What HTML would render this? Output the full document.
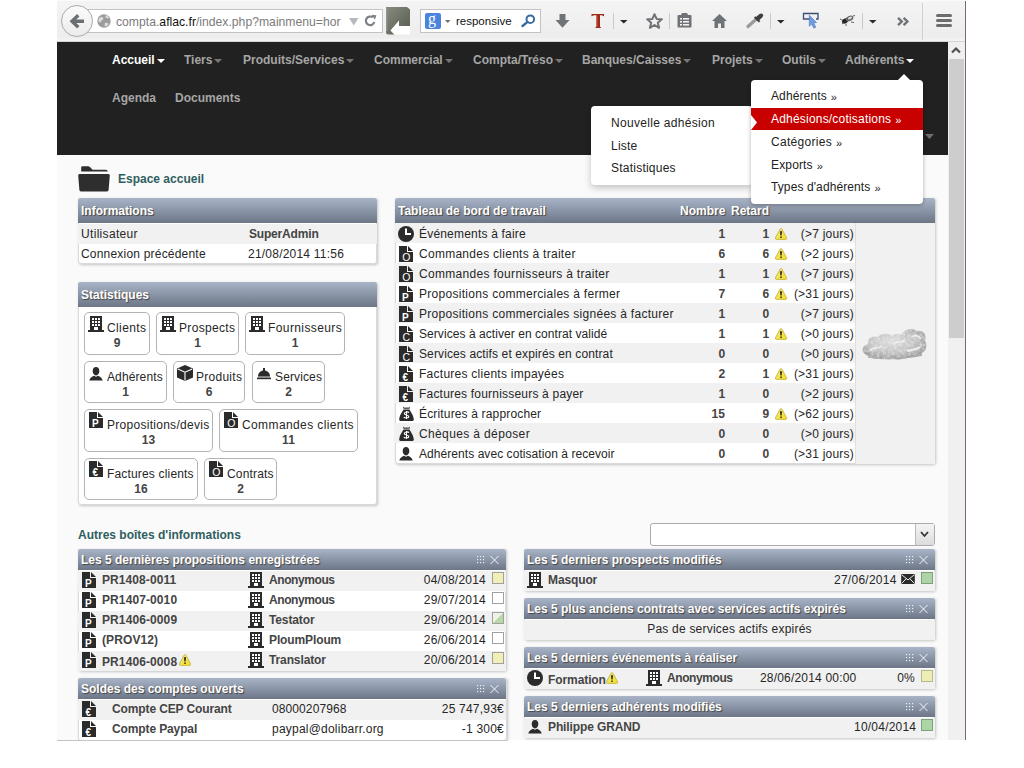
<!DOCTYPE html><html><head><meta charset="utf-8"><title>Dolibarr</title><style>
*{box-sizing:border-box}
html,body{margin:0;padding:0;width:1024px;height:768px;overflow:hidden;background:#fff;font-family:"Liberation Sans",sans-serif;}
.a{position:absolute;white-space:nowrap}
.mi{position:absolute;font-size:12px;font-weight:bold;color:#a6a6a6;white-space:nowrap;line-height:14px}
.car{display:inline-block;width:0;height:0;border-left:4px solid transparent;border-right:4px solid transparent;border-top:4px solid #777;margin-left:2px;vertical-align:1px}
.box{position:absolute;background:#fff;box-shadow:1px 1px 3px rgba(0,0,0,.22);border:1px solid #dadada;border-radius:0 0 3px 3px}
.hd{position:absolute;border-radius:3px 3px 0 0;background:linear-gradient(#a9b4c8,#6c7687);color:#fff;font-weight:bold;font-size:12px;white-space:nowrap;text-shadow:1px 1px 1px #444}
.t{position:absolute;font-size:12px;color:#262626;white-space:nowrap;line-height:22px}
.b{font-weight:bold;color:#444}
.g{background:#f1f1f1}
.sb{position:absolute;border:1px solid #b3b3b3;border-radius:5px;background:#fff}
svg{position:absolute;overflow:visible}
</style></head><body>
<svg width="0" height="0" style="position:absolute">
<defs>
<symbol id="doc" viewBox="0 0 14 16"><path d="M0 0H8V6H14V16H0Z" fill="#2b2b2b"/><path d="M9 0L14 5H9Z" fill="#2b2b2b"/></symbol>
<symbol id="bld" viewBox="0 0 16 16"><path d="M2 0H14V14H2Z" fill="#2b2b2b"/><rect x="0" y="14" width="16" height="2" fill="#2b2b2b"/><g fill="#fff"><rect x="4" y="2" width="2" height="2"/><rect x="7" y="2" width="2" height="2"/><rect x="10" y="2" width="2" height="2"/><rect x="4" y="5" width="2" height="2"/><rect x="7" y="5" width="2" height="2"/><rect x="10" y="5" width="2" height="2"/><rect x="4" y="8" width="2" height="2"/><rect x="7" y="8" width="2" height="2"/><rect x="10" y="8" width="2" height="2"/><rect x="6" y="11" width="4" height="3"/></g></symbol>
<symbol id="per" viewBox="0 0 14 14"><path d="M7 0C9 0 10.3 1.6 10.3 4C10.3 6.3 9 8.4 7 8.4C5 8.4 3.7 6.3 3.7 4C3.7 1.6 5 0 7 0Z" fill="#2b2b2b"/><path d="M0.3 13.6C0.8 10.8 3 9.6 5 8.8L7 9.8L9 8.8C11 9.6 13.2 10.8 13.7 13.6Z" fill="#2b2b2b"/></symbol>
<symbol id="clk" viewBox="0 0 16 16"><circle cx="8" cy="8" r="8" fill="#2b2b2b"/><path d="M7 2.5H9V7H13V9H7Z" fill="#fff"/></symbol>
<symbol id="bag" viewBox="0 0 15 15"><path d="M4 0.5L5.5 1.8L7.5 1.5L9.5 1.8L11 0.5L10.5 2.8H4.5Z" fill="#2b2b2b"/><path d="M4.6 3.6H10.4C11 5 14 8 14.8 13.2C15 14.4 14.2 15 13 15H2C0.8 15 0 14.4 0.2 13.2C1 8 4 5 4.6 3.6Z" fill="#2b2b2b"/><path d="M9.8 6.8C9.4 5.6 5.3 5.6 5.3 7.6C5.3 9.4 9.8 8.6 9.8 10.6C9.8 12.4 5.4 12.4 5 11" stroke="#fff" stroke-width="1.2" fill="none"/><path d="M7.5 5V12.8" stroke="#fff" stroke-width="1"/></symbol>
<symbol id="cube" viewBox="0 0 16 16"><path d="M8 0L16 3.5V12.5L8 16L0 12.5V3.5Z" fill="#2b2b2b"/><path d="M0.8 4L8 7.2L15.2 4M8 7.2V15.5" stroke="#fff" stroke-width="1.1" fill="none"/></symbol>
<symbol id="bell" viewBox="0 0 14 12"><rect x="6" y="0" width="2" height="3" fill="#2b2b2b"/><path d="M1 8.5C1 5 3.5 2.5 7 2.5C10.5 2.5 13 5 13 8.5Z" fill="#2b2b2b"/><rect x="0" y="9.6" width="14" height="1.6" fill="#2b2b2b"/><rect x="1" y="8.5" width="12" height="1.1" fill="#777"/></symbol>
<symbol id="warn" viewBox="0 0 12 12"><defs><linearGradient id="wg" x1="0" y1="0" x2="1" y2="1"><stop offset="0" stop-color="#f4ea8a"/><stop offset="1" stop-color="#f2df1e"/></linearGradient></defs><path d="M6 0.6Q6.6 0.6 7 1.3L11.6 9.8Q12 11.4 10.6 11.4H1.4Q0 11.4 0.4 9.8L5 1.3Q5.4 0.6 6 0.6Z" fill="url(#wg)" stroke="#c2ad3a" stroke-width="0.8"/><path d="M5 3.2H7L6.6 7.6H5.4Z" fill="#222"/><rect x="5.3" y="8.5" width="1.4" height="1.5" fill="#222"/></symbol>
<symbol id="env" viewBox="0 0 15 11"><rect x="0" y="0" width="15" height="11" fill="#2b2b2b"/><path d="M0.5 0.8L7.5 6.5L14.5 0.8M0.5 10.4L5.5 5.2M14.5 10.4L9.5 5.2" stroke="#fff" stroke-width="1" fill="none"/></symbol>
</defs></svg>
<div class="a" style="left:57px;top:0;width:909px;height:740px;background:#fafafa"></div>
<div class="a" style="left:57px;top:0;width:908px;height:41px;background:linear-gradient(#f4f4f4,#ededed 90%,#f5f5f5);border-top:1px solid #fbfbfb"></div>
<div class="a" style="left:57px;top:41px;width:908px;height:1px;background:#d4d4d4"></div>
<div class="a" style="left:965px;top:1px;width:1px;height:739px;background:#7d6b62"></div>
<div class="a" style="left:80px;top:9px;width:303px;height:24px;background:#fff;border:1px solid #c3c3c3"></div>
<div class="a" style="left:61px;top:5px;width:32px;height:32px;border-radius:50%;background:linear-gradient(#fbfbfb,#ececec);border:1px solid #ababab"></div>
<svg style="left:70px;top:14px" width="15" height="15"><path d="M8.3 1.2L2 7.2L8.3 13.2M2.8 7.2H14" stroke="#6c6f72" stroke-width="3.4" fill="none" stroke-linejoin="miter"/></svg>
<svg style="left:97px;top:14px" width="14" height="14"><circle cx="7" cy="7" r="6.7" fill="#9c9c9c"/><path d="M3 3.5C4.5 2.5 6 3 6.5 4.5C6 6 4.5 6 4 7.5C3.5 9 2 8.5 1.5 7C1.5 5.5 2 4.5 3 3.5ZM8 9C9.5 8.5 11 9 11.5 10C10.5 11.8 9 12.5 8 12.5C7.5 11.5 7.5 10 8 9ZM8.5 1.2C10 1.5 11.5 2.5 12.2 4C11 4.5 9.5 4 8.5 3.5Z" fill="#dcdcdc"/></svg>
<div class="a" style="left:116px;top:14px;font-size:12.2px;line-height:16px;color:#7b7b7b">compta.<span style="color:#111">aflac.fr</span>/index.php?mainmenu=hor</div>
<svg style="left:349px;top:18px" width="10" height="8"><path d="M0 0H9.5L4.75 7.5Z" fill="#b5b9bd"/></svg>
<svg style="left:364px;top:14px" width="13" height="13"><path d="M10.3 8A4.3 4.3 0 1 1 8.8 3.4" stroke="#7c8187" stroke-width="2.2" fill="none"/><path d="M7.5 0.8L12.3 1.2L11 5.8Z" fill="#7c8187"/></svg>
<svg style="left:386px;top:7px" width="25" height="29"><defs><linearGradient id="dg" x1="0" y1="0" x2="1" y2="1"><stop offset="0" stop-color="#878b80"/><stop offset="1" stop-color="#555a4f"/></linearGradient></defs><path d="M0 0H21L24 2.5V19H13V13.8L4.6 23.5L8.5 27.5H2.5Q0 27.5 0 25Z" fill="url(#dg)"/><path d="M13 13.8V19H24V27.5H8.5L4.6 23.5Z" fill="#fff"/><path d="M0.8 1V24" stroke="#9a9e94" stroke-width="1"/></svg>
<div class="a" style="left:420px;top:9px;width:121px;height:24px;background:#fff;border:1px solid #c3c3c3"></div>
<div class="a" style="left:425px;top:13px;width:16px;height:16px;border-radius:2px;background:#4b84df"></div>
<div class="a" style="left:428px;top:11px;font-family:'Liberation Serif';font-size:16px;line-height:16px;color:#fff">g</div>
<svg style="left:445px;top:20px" width="6" height="4"><path d="M0 0H5.5L2.75 3Z" fill="#6d6d6d"/></svg>
<div class="a" style="left:456px;top:13px;font-size:11.5px;line-height:16px;color:#111">responsive</div>
<svg style="left:521px;top:14px" width="15" height="13"><circle cx="9.3" cy="5.2" r="3.8" stroke="#3b6aa0" stroke-width="2" fill="none"/><path d="M6.6 7.9L1.5 12" stroke="#3b6aa0" stroke-width="2.4" stroke-linecap="round"/></svg>
<svg style="left:555px;top:14px" width="15" height="14"><path d="M4.5 0H10.5V6H14.5L7.5 13.8L0.5 6H4.5Z" fill="#6f7276"/></svg>
<svg style="left:590px;top:13px" width="16" height="16"><path d="M1.5 1H14V3.2H13.4Q12.8 2.3 11.5 2.3H10V13.6Q10 14.3 11 14.4V15H5.3V14.4Q6.4 14.3 6.4 13.6V2.3H4.2Q2.8 2.3 2.2 3.2H1.5Z" fill="#9c2a1a"/><path d="M7.2 2.5V13.5" stroke="#d0503a" stroke-width="0.8"/></svg>
<div class="a" style="left:613px;top:13px;width:1px;height:16px;background:#c9c9c9"></div>
<svg style="left:620px;top:20px" width="8" height="4"><path d="M0 0H7.5L3.75 3.6Z" fill="#2a2a2a"/></svg>
<svg style="left:646px;top:13px" width="17" height="16"><path d="M8.5 1.2L10.6 5.9L15.8 6.3L11.8 9.7L13.1 14.8L8.5 12L3.9 14.8L5.2 9.7L1.2 6.3L6.4 5.9Z" stroke="#6f7276" stroke-width="2" fill="none" stroke-linejoin="round"/></svg>
<div class="a" style="left:669px;top:13px;width:1px;height:16px;background:#c9c9c9"></div>
<svg style="left:677px;top:13px" width="15" height="15"><path d="M5 0H10L11 2H13.5Q14.5 2 14.5 3V13.5Q14.5 14.5 13.5 14.5H1.5Q0.5 14.5 0.5 13.5V3Q0.5 2 1.5 2H4Z" fill="#6f7276"/><g fill="#f2f2f2"><rect x="3" y="5" width="2" height="1.6"/><rect x="6" y="5" width="6" height="1.6"/><rect x="3" y="8" width="2" height="1.6"/><rect x="6" y="8" width="6" height="1.6"/><rect x="3" y="11" width="2" height="1.6"/><rect x="6" y="11" width="6" height="1.6"/></g></svg>
<svg style="left:712px;top:14px" width="15" height="14"><path d="M7.5 0L15 7H12.5V14H9V9.5H6V14H2.5V7H0Z" fill="#6f7276"/></svg>
<svg style="left:746px;top:13px" width="18" height="15"><path d="M2 13.5L11 5.5" stroke="#9a9a9a" stroke-width="3.2" stroke-linecap="round"/><path d="M9.5 4.5L13.5 1Q15.5 -0.3 16.8 1.2Q17.8 2.8 16.2 4.4L12.5 7.8Z" fill="#3e3e3e"/><path d="M8.6 4L13.6 8.8" stroke="#3e3e3e" stroke-width="2"/></svg>
<div class="a" style="left:770px;top:13px;width:1px;height:16px;background:#c9c9c9"></div>
<svg style="left:777px;top:20px" width="8" height="4"><path d="M0 0H7.5L3.75 3.6Z" fill="#2a2a2a"/></svg>
<svg style="left:802px;top:12px" width="18" height="18"><path d="M8 7H1.5V1.5H16V7H14" stroke="#3d4f70" stroke-width="1.3" fill="none"/><path d="M7.3 3.2L14.6 10.6L11.6 10.9L13.8 15.2L11.8 16.2L9.6 11.9L7.3 14.3Z" fill="#6f9be0" stroke="#4a78c0" stroke-width="0.6"/></svg>
<svg style="left:839px;top:14px" width="18" height="13"><defs><filter id="bb"><feGaussianBlur stdDeviation="0.5"/></filter></defs><g filter="url(#bb)"><ellipse cx="6" cy="7" rx="3.2" ry="2.4" fill="#222" transform="rotate(-30 6 7)"/><ellipse cx="10.5" cy="4.5" rx="4" ry="2.6" fill="#666" transform="rotate(-25 10.5 4.5)"/><ellipse cx="11" cy="4" rx="2.2" ry="1.2" fill="#ddd" transform="rotate(-25 11 4)"/><path d="M1 5L4 6.5M3 10L5 8.5M7 12L7 9.5M12 8L15 8.5M14 2L16 1.5" stroke="#555" stroke-width="0.9"/></g></svg>
<div class="a" style="left:862px;top:13px;width:1px;height:16px;background:#c9c9c9"></div>
<svg style="left:869px;top:20px" width="8" height="4"><path d="M0 0H7.5L3.75 3.6Z" fill="#2a2a2a"/></svg>
<svg style="left:897px;top:17px" width="13" height="9"><path d="M1 0.8L4.8 4.5L1 8.2M6.6 0.8L10.4 4.5L6.6 8.2" stroke="#6f7276" stroke-width="2.4" fill="none"/></svg>
<div class="a" style="left:922px;top:3px;width:1px;height:37px;background:#d0d0d0"></div>
<div class="a" style="left:936px;top:14px;width:16px;height:3px;border-radius:1.5px;background:#6c6c6c"></div>
<div class="a" style="left:936px;top:19px;width:16px;height:3px;border-radius:1.5px;background:#6c6c6c"></div>
<div class="a" style="left:936px;top:24px;width:16px;height:3px;border-radius:1.5px;background:#6c6c6c"></div>
<div class="a" style="left:57px;top:42px;width:891px;height:113px;background:#212121"></div>
<div class="mi" style="left:112px;top:53px;color:#fff">Accueil<span class="car" style="border-top-color:#fff"></span></div>
<div class="mi" style="left:184px;top:53px;color:#a6a6a6">Tiers<span class="car" style="border-top-color:#777"></span></div>
<div class="mi" style="left:243px;top:53px;color:#a6a6a6">Produits/Services<span class="car" style="border-top-color:#777"></span></div>
<div class="mi" style="left:374px;top:53px;color:#a6a6a6">Commercial<span class="car" style="border-top-color:#777"></span></div>
<div class="mi" style="left:473px;top:53px;color:#a6a6a6">Compta/Tréso<span class="car" style="border-top-color:#777"></span></div>
<div class="mi" style="left:582px;top:53px;color:#a6a6a6">Banques/Caisses<span class="car" style="border-top-color:#777"></span></div>
<div class="mi" style="left:712px;top:53px;color:#a6a6a6">Projets<span class="car" style="border-top-color:#777"></span></div>
<div class="mi" style="left:782px;top:53px;color:#a6a6a6">Outils<span class="car" style="border-top-color:#777"></span></div>
<div class="mi" style="left:845px;top:53px;color:#a6a6a6">Adhérents<span class="car" style="border-top-color:#fff"></span></div>
<div class="mi" style="left:112px;top:91px">Agenda</div>
<div class="mi" style="left:175px;top:91px">Documents</div>
<svg style="left:925px;top:134px" width="10" height="6"><path d="M0 0H9L4.5 5Z" fill="#6e6e6e"/></svg>
<div class="a" style="left:948px;top:42px;width:17px;height:698px;background:#f0f0f0"></div>
<svg style="left:951px;top:46px" width="10" height="8"><path d="M1 6.5L5 2.5L9 6.5" stroke="#505050" stroke-width="2.2" fill="none"/></svg>
<div class="a" style="left:949px;top:59px;width:15px;height:279px;background:#cdcdcd"></div>
<svg style="left:78px;top:166px" width="33" height="27"><path d="M4.5 0.3H10Q11.2 0.3 12.2 1.2L14.6 3.7H28Q29.6 3.7 29.8 5.6H3.2V1.6Q3.2 0.3 4.5 0.3Z" fill="#2e2e2e"/><path d="M1.6 8H30.4Q32 8 31.8 9.6L30.6 24Q30.5 25.4 29 25.4H3Q1.5 25.4 1.4 24L0.2 9.6Q0 8 1.6 8Z" fill="#2e2e2e"/></svg>
<div class="a b" style="left:118px;top:171px;font-size:12px;line-height:16px;color:#2f5e60">Espace accueil</div>
<div class="box" style="left:78px;top:198px;width:299px;height:66px"></div>
<div class="hd" style="left:78px;top:198px;width:299px;height:25px;line-height:27px;padding-left:3px">Informations</div>
<div class="a g" style="left:78px;top:224px;width:299px;height:20px"></div>
<div class="t" style="left:81px;top:223px;letter-spacing:0.32px">Utilisateur</div>
<div class="t b" style="left:249px;top:223px;letter-spacing:-0.18px">SuperAdmin</div>
<div class="t" style="left:81px;top:243px;letter-spacing:0.20px">Connexion précédente</div>
<div class="t" style="left:248px;top:243px;letter-spacing:0.22px">21/08/2014 11:56</div>
<div class="box" style="left:78px;top:282px;width:299px;height:223px"></div>
<div class="hd" style="left:78px;top:282px;width:299px;height:25px;line-height:27px;padding-left:3px">Statistiques</div>
<div class="sb" style="left:84px;top:312px;width:66px;height:43px"></div>
<svg style="left:88px;top:316px" width="16" height="16"><use href="#bld" width="16" height="16"/></svg>
<div class="t" style="left:107px;top:317px;letter-spacing:0.38px">Clients</div>
<div class="t b" style="left:84px;width:66px;text-align:center;top:332px;letter-spacing:-0.12px">9</div>
<div class="sb" style="left:156px;top:312px;width:83px;height:43px"></div>
<svg style="left:160px;top:316px" width="16" height="16"><use href="#bld" width="16" height="16"/></svg>
<div class="t" style="left:179px;top:317px;letter-spacing:0.33px">Prospects</div>
<div class="t b" style="left:156px;width:83px;text-align:center;top:332px;letter-spacing:-0.12px">1</div>
<div class="sb" style="left:245px;top:312px;width:100px;height:43px"></div>
<svg style="left:249px;top:316px" width="16" height="16"><use href="#bld" width="16" height="16"/></svg>
<div class="t" style="left:268px;top:317px;letter-spacing:0.40px">Fournisseurs</div>
<div class="t b" style="left:245px;width:100px;text-align:center;top:332px;letter-spacing:-0.12px">1</div>
<div class="sb" style="left:84px;top:361px;width:83px;height:42px"></div>
<svg style="left:89px;top:367px" width="14" height="14"><use href="#per" width="14" height="14"/></svg>
<div class="t" style="left:107px;top:366px;letter-spacing:0.12px">Adhérents</div>
<div class="t b" style="left:84px;width:83px;text-align:center;top:381px;letter-spacing:-0.12px">1</div>
<div class="sb" style="left:173px;top:361px;width:72px;height:42px"></div>
<svg style="left:177px;top:365px" width="16" height="16"><use href="#cube" width="16" height="16"/></svg>
<div class="t" style="left:196px;top:366px;letter-spacing:0.27px">Produits</div>
<div class="t b" style="left:173px;width:72px;text-align:center;top:381px;letter-spacing:-0.12px">6</div>
<div class="sb" style="left:252px;top:361px;width:73px;height:42px"></div>
<svg style="left:257px;top:368px" width="14" height="12"><use href="#bell" width="14" height="12"/></svg>
<div class="t" style="left:275px;top:366px;letter-spacing:0.13px">Services</div>
<div class="t b" style="left:252px;width:73px;text-align:center;top:381px;letter-spacing:-0.12px">2</div>
<div class="sb" style="left:84px;top:409px;width:129px;height:43px"></div>
<svg style="left:89px;top:412px" width="14" height="16"><use href="#doc" width="14" height="16"/><text x="3.0" y="14.8" font-family="Liberation Sans" font-weight="bold" font-size="10" fill="#fff">P</text></svg>
<div class="t" style="left:107px;top:414px;letter-spacing:0.28px">Propositions/devis</div>
<div class="t b" style="left:84px;width:129px;text-align:center;top:429px;letter-spacing:0.10px">13</div>
<div class="sb" style="left:219px;top:409px;width:139px;height:43px"></div>
<svg style="left:224px;top:412px" width="14" height="16"><use href="#doc" width="14" height="16"/><text x="3.2" y="14.8" font-family="Liberation Sans" font-weight="normal" font-size="10.5" fill="#fff">O</text></svg>
<div class="t" style="left:242px;top:414px;letter-spacing:0.39px">Commandes clients</div>
<div class="t b" style="left:219px;width:139px;text-align:center;top:429px;letter-spacing:0.10px">11</div>
<div class="sb" style="left:84px;top:458px;width:114px;height:42px"></div>
<svg style="left:89px;top:461px" width="14" height="16"><use href="#doc" width="14" height="16"/><text x="3.6" y="14.8" font-family="Liberation Sans" font-weight="bold" font-size="10" fill="#fff">€</text></svg>
<div class="t" style="left:107px;top:463px;letter-spacing:0.17px">Factures clients</div>
<div class="t b" style="left:84px;width:114px;text-align:center;top:478px;letter-spacing:0.10px">16</div>
<div class="sb" style="left:204px;top:458px;width:73px;height:42px"></div>
<svg style="left:209px;top:461px" width="14" height="16"><use href="#doc" width="14" height="16"/><text x="3.2" y="14.8" font-family="Liberation Sans" font-weight="normal" font-size="10.5" fill="#fff">O</text></svg>
<div class="t" style="left:227px;top:463px;letter-spacing:0.16px">Contrats</div>
<div class="t b" style="left:204px;width:73px;text-align:center;top:478px;letter-spacing:-0.12px">2</div>
<div class="box" style="left:395px;top:198px;width:540px;height:266px"></div>
<div class="hd" style="left:395px;top:198px;width:540px;height:25px;line-height:27px;padding-left:3px">Tableau de bord de travail</div>
<div class="hd" style="left:680px;top:198px;height:25px;line-height:27px;background:none">Nombre</div>
<div class="hd" style="left:731px;top:198px;height:25px;line-height:27px;background:none">Retard</div>
<div class="a g" style="left:855px;top:223px;width:80px;height:241px;border-left:1px solid #e0e0e0"></div>
<div class="a g" style="left:395px;top:223px;width:460px;height:20px"></div>
<svg style="left:398px;top:226px" width="16" height="16"><use href="#clk" width="16" height="16"/></svg>
<div class="t" style="left:419px;top:223px;letter-spacing:0.19px">Événements à faire</div>
<div class="t b" style="left:640px;width:85px;text-align:right;top:223px;letter-spacing:-0.12px">1</div>
<div class="t b" style="left:700px;width:69px;text-align:right;top:223px;letter-spacing:-0.12px">1</div>
<svg style="left:775px;top:228px" width="12" height="12"><use href="#warn" width="12" height="12"/></svg>
<div class="t" style="left:780px;width:74px;text-align:right;top:223px;letter-spacing:0.22px">(>7 jours)</div>
<svg style="left:399px;top:246px" width="14" height="16"><use href="#doc" width="14" height="16"/><text x="3.2" y="14.8" font-family="Liberation Sans" font-weight="normal" font-size="10.5" fill="#fff">O</text></svg>
<div class="t" style="left:419px;top:243px;letter-spacing:0.27px">Commandes clients à traiter</div>
<div class="t b" style="left:640px;width:85px;text-align:right;top:243px;letter-spacing:-0.12px">6</div>
<div class="t b" style="left:700px;width:69px;text-align:right;top:243px;letter-spacing:-0.12px">6</div>
<svg style="left:775px;top:248px" width="12" height="12"><use href="#warn" width="12" height="12"/></svg>
<div class="t" style="left:780px;width:74px;text-align:right;top:243px;letter-spacing:0.22px">(>2 jours)</div>
<div class="a g" style="left:395px;top:263px;width:460px;height:20px"></div>
<svg style="left:399px;top:266px" width="14" height="16"><use href="#doc" width="14" height="16"/><text x="3.2" y="14.8" font-family="Liberation Sans" font-weight="normal" font-size="10.5" fill="#fff">O</text></svg>
<div class="t" style="left:419px;top:263px;letter-spacing:0.31px">Commandes fournisseurs à traiter</div>
<div class="t b" style="left:640px;width:85px;text-align:right;top:263px;letter-spacing:-0.12px">1</div>
<div class="t b" style="left:700px;width:69px;text-align:right;top:263px;letter-spacing:-0.12px">1</div>
<svg style="left:775px;top:268px" width="12" height="12"><use href="#warn" width="12" height="12"/></svg>
<div class="t" style="left:780px;width:74px;text-align:right;top:263px;letter-spacing:0.22px">(>7 jours)</div>
<svg style="left:399px;top:286px" width="14" height="16"><use href="#doc" width="14" height="16"/><text x="3.0" y="14.8" font-family="Liberation Sans" font-weight="bold" font-size="10" fill="#fff">P</text></svg>
<div class="t" style="left:419px;top:283px;letter-spacing:0.29px">Propositions commerciales à fermer</div>
<div class="t b" style="left:640px;width:85px;text-align:right;top:283px;letter-spacing:-0.12px">7</div>
<div class="t b" style="left:700px;width:69px;text-align:right;top:283px;letter-spacing:-0.12px">6</div>
<svg style="left:775px;top:288px" width="12" height="12"><use href="#warn" width="12" height="12"/></svg>
<div class="t" style="left:780px;width:74px;text-align:right;top:283px;letter-spacing:0.22px">(>31 jours)</div>
<div class="a g" style="left:395px;top:303px;width:460px;height:20px"></div>
<svg style="left:399px;top:306px" width="14" height="16"><use href="#doc" width="14" height="16"/><text x="3.0" y="14.8" font-family="Liberation Sans" font-weight="bold" font-size="10" fill="#fff">P</text></svg>
<div class="t" style="left:419px;top:303px;letter-spacing:0.29px">Propositions commerciales signées à facturer</div>
<div class="t b" style="left:640px;width:85px;text-align:right;top:303px;letter-spacing:-0.12px">1</div>
<div class="t b" style="left:700px;width:69px;text-align:right;top:303px;letter-spacing:-0.12px">0</div>
<div class="t" style="left:780px;width:74px;text-align:right;top:303px;letter-spacing:0.22px">(>7 jours)</div>
<svg style="left:399px;top:326px" width="14" height="16"><use href="#doc" width="14" height="16"/><text x="3.4" y="14.8" font-family="Liberation Sans" font-weight="normal" font-size="10.5" fill="#fff">C</text></svg>
<div class="t" style="left:419px;top:323px;letter-spacing:0.06px">Services à activer en contrat validé</div>
<div class="t b" style="left:640px;width:85px;text-align:right;top:323px;letter-spacing:-0.12px">1</div>
<div class="t b" style="left:700px;width:69px;text-align:right;top:323px;letter-spacing:-0.12px">1</div>
<svg style="left:775px;top:328px" width="12" height="12"><use href="#warn" width="12" height="12"/></svg>
<div class="t" style="left:780px;width:74px;text-align:right;top:323px;letter-spacing:0.22px">(>0 jours)</div>
<div class="a g" style="left:395px;top:343px;width:460px;height:20px"></div>
<svg style="left:399px;top:346px" width="14" height="16"><use href="#doc" width="14" height="16"/><text x="3.4" y="14.8" font-family="Liberation Sans" font-weight="normal" font-size="10.5" fill="#fff">C</text></svg>
<div class="t" style="left:419px;top:343px;letter-spacing:0.12px">Services actifs et expirés en contrat</div>
<div class="t b" style="left:640px;width:85px;text-align:right;top:343px;letter-spacing:-0.12px">0</div>
<div class="t b" style="left:700px;width:69px;text-align:right;top:343px;letter-spacing:-0.12px">0</div>
<div class="t" style="left:780px;width:74px;text-align:right;top:343px;letter-spacing:0.22px">(>0 jours)</div>
<svg style="left:399px;top:366px" width="14" height="16"><use href="#doc" width="14" height="16"/><text x="3.6" y="14.8" font-family="Liberation Sans" font-weight="bold" font-size="10" fill="#fff">€</text></svg>
<div class="t" style="left:419px;top:363px;letter-spacing:0.26px">Factures clients impayées</div>
<div class="t b" style="left:640px;width:85px;text-align:right;top:363px;letter-spacing:-0.12px">2</div>
<div class="t b" style="left:700px;width:69px;text-align:right;top:363px;letter-spacing:-0.12px">1</div>
<svg style="left:775px;top:368px" width="12" height="12"><use href="#warn" width="12" height="12"/></svg>
<div class="t" style="left:780px;width:74px;text-align:right;top:363px;letter-spacing:0.22px">(>31 jours)</div>
<div class="a g" style="left:395px;top:383px;width:460px;height:20px"></div>
<svg style="left:399px;top:386px" width="14" height="16"><use href="#doc" width="14" height="16"/><text x="3.6" y="14.8" font-family="Liberation Sans" font-weight="bold" font-size="10" fill="#fff">€</text></svg>
<div class="t" style="left:419px;top:383px;letter-spacing:0.20px">Factures fournisseurs à payer</div>
<div class="t b" style="left:640px;width:85px;text-align:right;top:383px;letter-spacing:-0.12px">1</div>
<div class="t b" style="left:700px;width:69px;text-align:right;top:383px;letter-spacing:-0.12px">0</div>
<div class="t" style="left:780px;width:74px;text-align:right;top:383px;letter-spacing:0.22px">(>2 jours)</div>
<svg style="left:399px;top:406px" width="15" height="15"><use href="#bag" width="15" height="15"/></svg>
<div class="t" style="left:419px;top:403px;letter-spacing:0.16px">Écritures à rapprocher</div>
<div class="t b" style="left:640px;width:85px;text-align:right;top:403px;letter-spacing:0.10px">15</div>
<div class="t b" style="left:700px;width:69px;text-align:right;top:403px;letter-spacing:-0.12px">9</div>
<svg style="left:775px;top:408px" width="12" height="12"><use href="#warn" width="12" height="12"/></svg>
<div class="t" style="left:780px;width:74px;text-align:right;top:403px;letter-spacing:0.22px">(>62 jours)</div>
<div class="a g" style="left:395px;top:423px;width:460px;height:20px"></div>
<svg style="left:399px;top:426px" width="15" height="15"><use href="#bag" width="15" height="15"/></svg>
<div class="t" style="left:419px;top:423px;letter-spacing:0.37px">Chèques à déposer</div>
<div class="t b" style="left:640px;width:85px;text-align:right;top:423px;letter-spacing:-0.12px">0</div>
<div class="t b" style="left:700px;width:69px;text-align:right;top:423px;letter-spacing:-0.12px">0</div>
<div class="t" style="left:780px;width:74px;text-align:right;top:423px;letter-spacing:0.22px">(>0 jours)</div>
<svg style="left:399px;top:447px" width="14" height="14"><use href="#per" width="14" height="14"/></svg>
<div class="t" style="left:419px;top:443px;letter-spacing:0.06px">Adhérents avec cotisation à recevoir</div>
<div class="t b" style="left:640px;width:85px;text-align:right;top:443px;letter-spacing:-0.12px">0</div>
<div class="t b" style="left:700px;width:69px;text-align:right;top:443px;letter-spacing:-0.12px">0</div>
<div class="t" style="left:780px;width:74px;text-align:right;top:443px;letter-spacing:0.22px">(>31 jours)</div>
<svg style="left:860px;top:324px" width="72" height="40"><defs><filter id="bl" x="-20%" y="-20%" width="140%" height="140%"><feTurbulence type="fractalNoise" baseFrequency="0.35" numOctaves="2" seed="3" result="n"/><feColorMatrix in="n" type="matrix" values="0 0 0 0 1  0 0 0 0 1  0 0 0 0 1  0.9 0 0 0 -0.35" result="w"/><feComposite in="w" in2="SourceGraphic" operator="in" result="wt"/><feMerge result="m"><feMergeNode in="SourceGraphic"/><feMergeNode in="wt"/></feMerge><feGaussianBlur in="m" stdDeviation="0.5"/></filter>
<radialGradient id="cg" cx="0.45" cy="0.4" r="0.6"><stop offset="0" stop-color="#dcdcdc"/><stop offset="0.6" stop-color="#c4c4c4"/><stop offset="1" stop-color="#9e9e9e"/></radialGradient></defs>
<g filter="url(#bl)">
<path d="M5 30C1 28 2 21 8 20C7 14 13 11 18 13C21 9 29 9 32 12C34 10 38 9 41 11C44 5 52 3 57 7C63 6 67 11 65 17C68 21 66 27 62 29C60 33 54 34 50 33C44 36 34 36 28 34C20 36 10 35 5 30Z" fill="url(#cg)"/>
<path d="M10 26C14 23 19 25 22 22M32 20C36 17 42 19 45 16M47 27C52 25 57 26 60 23M52 13C55 10 59 12 61 15" stroke="#e6e6e6" stroke-width="2.2" fill="none"/>
<path d="M8 33Q35 37 62 31" stroke="#a4a4a4" stroke-width="1.6" fill="none"/>
</g></svg>
<div class="a b" style="left:78px;top:527px;font-size:12px;line-height:16px;color:#2f5e60">Autres boîtes d'informations</div>
<div class="a" style="left:650px;top:523px;width:285px;height:23px;background:#fff;border:1px solid #aaa;border-radius:3px"></div>
<div class="a" style="left:915px;top:524px;width:19px;height:21px;background:linear-gradient(#f4f4f4,#dcdcdc);border-left:1px solid #bbb"></div>
<svg style="left:920px;top:531px" width="9" height="7"><path d="M1 1L4.5 5L8 1" stroke="#333" stroke-width="1.8" fill="none"/></svg>
<div class="box" style="left:78px;top:549px;width:428px;height:122px"></div>
<div class="hd" style="left:78px;top:549px;width:428px;height:21px;line-height:23px;padding-left:3px">Les 5 dernières propositions enregistrées</div>
<svg style="left:476px;top:555px" width="24" height="11"><rect x="1" y="1" width="1.2" height="1.2" fill="#eef0f4"/><rect x="1" y="4" width="1.2" height="1.2" fill="#eef0f4"/><rect x="1" y="7" width="1.2" height="1.2" fill="#eef0f4"/><rect x="4" y="1" width="1.2" height="1.2" fill="#eef0f4"/><rect x="4" y="4" width="1.2" height="1.2" fill="#eef0f4"/><rect x="4" y="7" width="1.2" height="1.2" fill="#eef0f4"/><rect x="7" y="1" width="1.2" height="1.2" fill="#eef0f4"/><rect x="7" y="4" width="1.2" height="1.2" fill="#eef0f4"/><rect x="7" y="7" width="1.2" height="1.2" fill="#eef0f4"/><path d="M14.5 1L22.5 9M22.5 1L14.5 9" stroke="#f5f6f8" stroke-width="1"/></svg>
<div class="a g" style="left:78px;top:571px;width:428px;height:20px"></div>
<svg style="left:82px;top:572px" width="14" height="16"><use href="#doc" width="14" height="16"/><text x="3.0" y="14.8" font-family="Liberation Sans" font-weight="bold" font-size="10" fill="#fff">P</text></svg>
<div class="t b" style="left:102px;top:569px;letter-spacing:0.08px">PR1408-0011</div>
<svg style="left:248px;top:572px" width="16" height="16"><use href="#bld" width="16" height="16"/></svg>
<div class="t b" style="left:269px;top:569px;letter-spacing:-0.42px">Anonymous</div>
<div class="t" style="left:400px;width:86px;text-align:right;top:569px;letter-spacing:0.22px">04/08/2014</div>
<div class="a" style="left:492px;top:572px;width:12px;height:12px;background:#f3eeb8;border:1px solid #a0a0a0"></div>
<svg style="left:82px;top:592px" width="14" height="16"><use href="#doc" width="14" height="16"/><text x="3.0" y="14.8" font-family="Liberation Sans" font-weight="bold" font-size="10" fill="#fff">P</text></svg>
<div class="t b" style="left:102px;top:589px;letter-spacing:0.10px">PR1407-0010</div>
<svg style="left:248px;top:592px" width="16" height="16"><use href="#bld" width="16" height="16"/></svg>
<div class="t b" style="left:269px;top:589px;letter-spacing:-0.42px">Anonymous</div>
<div class="t" style="left:400px;width:86px;text-align:right;top:589px;letter-spacing:0.22px">29/07/2014</div>
<div class="a" style="left:492px;top:592px;width:12px;height:12px;background:#fff;border:1px solid #a0a0a0"></div>
<div class="a g" style="left:78px;top:611px;width:428px;height:20px"></div>
<svg style="left:82px;top:612px" width="14" height="16"><use href="#doc" width="14" height="16"/><text x="3.0" y="14.8" font-family="Liberation Sans" font-weight="bold" font-size="10" fill="#fff">P</text></svg>
<div class="t b" style="left:102px;top:609px;letter-spacing:0.10px">PR1406-0009</div>
<svg style="left:248px;top:612px" width="16" height="16"><use href="#bld" width="16" height="16"/></svg>
<div class="t b" style="left:269px;top:609px;letter-spacing:-0.12px">Testator</div>
<div class="t" style="left:400px;width:86px;text-align:right;top:609px;letter-spacing:0.22px">29/06/2014</div>
<div class="a" style="left:492px;top:612px;width:12px;height:12px;background:linear-gradient(135deg,#eef3e6 45%,#b8d8a8 55%);border:1px solid #a0a0a0"></div>
<svg style="left:82px;top:632px" width="14" height="16"><use href="#doc" width="14" height="16"/><text x="3.0" y="14.8" font-family="Liberation Sans" font-weight="bold" font-size="10" fill="#fff">P</text></svg>
<div class="t b" style="left:102px;top:629px;letter-spacing:0.10px">(PROV12)</div>
<svg style="left:248px;top:632px" width="16" height="16"><use href="#bld" width="16" height="16"/></svg>
<div class="t b" style="left:269px;top:629px;letter-spacing:-0.12px">PloumPloum</div>
<div class="t" style="left:400px;width:86px;text-align:right;top:629px;letter-spacing:0.22px">26/06/2014</div>
<div class="a" style="left:492px;top:632px;width:12px;height:12px;background:#fff;border:1px solid #a0a0a0"></div>
<div class="a g" style="left:78px;top:651px;width:428px;height:20px"></div>
<svg style="left:82px;top:652px" width="14" height="16"><use href="#doc" width="14" height="16"/><text x="3.0" y="14.8" font-family="Liberation Sans" font-weight="bold" font-size="10" fill="#fff">P</text></svg>
<div class="t b" style="left:102px;top:651px;letter-spacing:0.10px">PR1406-0008</div>
<svg style="left:179px;top:654px" width="12" height="12"><use href="#warn" width="12" height="12"/></svg>
<svg style="left:248px;top:652px" width="16" height="16"><use href="#bld" width="16" height="16"/></svg>
<div class="t b" style="left:269px;top:649px;letter-spacing:-0.12px">Translator</div>
<div class="t" style="left:400px;width:86px;text-align:right;top:649px;letter-spacing:0.22px">20/06/2014</div>
<div class="a" style="left:492px;top:652px;width:12px;height:12px;background:#f3eeb8;border:1px solid #a0a0a0"></div>
<div class="box" style="left:78px;top:678px;width:429px;height:63px"></div>
<div class="hd" style="left:78px;top:678px;width:428px;height:21px;line-height:23px;padding-left:3px">Soldes des comptes ouverts</div>
<svg style="left:476px;top:684px" width="24" height="11"><rect x="1" y="1" width="1.2" height="1.2" fill="#eef0f4"/><rect x="1" y="4" width="1.2" height="1.2" fill="#eef0f4"/><rect x="1" y="7" width="1.2" height="1.2" fill="#eef0f4"/><rect x="4" y="1" width="1.2" height="1.2" fill="#eef0f4"/><rect x="4" y="4" width="1.2" height="1.2" fill="#eef0f4"/><rect x="4" y="7" width="1.2" height="1.2" fill="#eef0f4"/><rect x="7" y="1" width="1.2" height="1.2" fill="#eef0f4"/><rect x="7" y="4" width="1.2" height="1.2" fill="#eef0f4"/><rect x="7" y="7" width="1.2" height="1.2" fill="#eef0f4"/><path d="M14.5 1L22.5 9M22.5 1L14.5 9" stroke="#f5f6f8" stroke-width="1"/></svg>
<div class="a g" style="left:78px;top:700px;width:428px;height:20px"></div>
<svg style="left:82px;top:701px" width="14" height="16"><use href="#doc" width="14" height="16"/><text x="3.6" y="14.8" font-family="Liberation Sans" font-weight="bold" font-size="10" fill="#fff">€</text></svg>
<div class="t b" style="left:112px;top:698px;letter-spacing:-0.12px">Compte CEP Courant</div>
<div class="t" style="left:272px;top:698px;letter-spacing:0.10px">08000207968</div>
<div class="t" style="left:400px;width:104px;text-align:right;top:698px;letter-spacing:0.22px">25 747,93€</div>
<svg style="left:82px;top:721px" width="14" height="16"><use href="#doc" width="14" height="16"/><text x="3.6" y="14.8" font-family="Liberation Sans" font-weight="bold" font-size="10" fill="#fff">€</text></svg>
<div class="t b" style="left:112px;top:718px;letter-spacing:-0.12px">Compte Paypal</div>
<div class="t" style="left:272px;top:718px;letter-spacing:0.22px">paypal@dolibarr.org</div>
<div class="t" style="left:400px;width:104px;text-align:right;top:718px;letter-spacing:0.22px">-1 300€</div>
<div class="box" style="left:524px;top:549px;width:411px;height:42px"></div>
<div class="hd" style="left:524px;top:549px;width:411px;height:21px;line-height:23px;padding-left:3px">Les 5 derniers prospects modifiés</div>
<svg style="left:905px;top:555px" width="24" height="11"><rect x="1" y="1" width="1.2" height="1.2" fill="#eef0f4"/><rect x="1" y="4" width="1.2" height="1.2" fill="#eef0f4"/><rect x="1" y="7" width="1.2" height="1.2" fill="#eef0f4"/><rect x="4" y="1" width="1.2" height="1.2" fill="#eef0f4"/><rect x="4" y="4" width="1.2" height="1.2" fill="#eef0f4"/><rect x="4" y="7" width="1.2" height="1.2" fill="#eef0f4"/><rect x="7" y="1" width="1.2" height="1.2" fill="#eef0f4"/><rect x="7" y="4" width="1.2" height="1.2" fill="#eef0f4"/><rect x="7" y="7" width="1.2" height="1.2" fill="#eef0f4"/><path d="M14.5 1L22.5 9M22.5 1L14.5 9" stroke="#f5f6f8" stroke-width="1"/></svg>
<div class="a g" style="left:524px;top:571px;width:411px;height:20px"></div>
<svg style="left:527px;top:572px" width="16" height="16"><use href="#bld" width="16" height="16"/></svg>
<div class="t b" style="left:548px;top:569px;letter-spacing:-0.12px">Masquor</div>
<div class="t" style="left:834px;top:569px;letter-spacing:0.26px">27/06/2014</div>
<svg style="left:901px;top:574px" width="14" height="10"><use href="#env" width="14" height="10"/></svg>
<div class="a" style="left:921px;top:572px;width:12px;height:12px;background:#acd5a6;border:1px solid #7f9f7f"></div>
<div class="box" style="left:524px;top:598px;width:411px;height:42px"></div>
<div class="hd" style="left:524px;top:598px;width:411px;height:21px;line-height:23px;padding-left:3px">Les 5 plus anciens contrats avec services actifs expirés</div>
<svg style="left:905px;top:604px" width="24" height="11"><rect x="1" y="1" width="1.2" height="1.2" fill="#eef0f4"/><rect x="1" y="4" width="1.2" height="1.2" fill="#eef0f4"/><rect x="1" y="7" width="1.2" height="1.2" fill="#eef0f4"/><rect x="4" y="1" width="1.2" height="1.2" fill="#eef0f4"/><rect x="4" y="4" width="1.2" height="1.2" fill="#eef0f4"/><rect x="4" y="7" width="1.2" height="1.2" fill="#eef0f4"/><rect x="7" y="1" width="1.2" height="1.2" fill="#eef0f4"/><rect x="7" y="4" width="1.2" height="1.2" fill="#eef0f4"/><rect x="7" y="7" width="1.2" height="1.2" fill="#eef0f4"/><path d="M14.5 1L22.5 9M22.5 1L14.5 9" stroke="#f5f6f8" stroke-width="1"/></svg>
<div class="a g" style="left:524px;top:620px;width:411px;height:20px"></div>
<div class="t" style="left:524px;width:411px;text-align:center;top:618px;letter-spacing:0.22px">Pas de services actifs expirés</div>
<div class="box" style="left:524px;top:647px;width:411px;height:42px"></div>
<div class="hd" style="left:524px;top:647px;width:411px;height:21px;line-height:23px;padding-left:3px">Les 5 derniers événements à réaliser</div>
<svg style="left:905px;top:653px" width="24" height="11"><rect x="1" y="1" width="1.2" height="1.2" fill="#eef0f4"/><rect x="1" y="4" width="1.2" height="1.2" fill="#eef0f4"/><rect x="1" y="7" width="1.2" height="1.2" fill="#eef0f4"/><rect x="4" y="1" width="1.2" height="1.2" fill="#eef0f4"/><rect x="4" y="4" width="1.2" height="1.2" fill="#eef0f4"/><rect x="4" y="7" width="1.2" height="1.2" fill="#eef0f4"/><rect x="7" y="1" width="1.2" height="1.2" fill="#eef0f4"/><rect x="7" y="4" width="1.2" height="1.2" fill="#eef0f4"/><rect x="7" y="7" width="1.2" height="1.2" fill="#eef0f4"/><path d="M14.5 1L22.5 9M22.5 1L14.5 9" stroke="#f5f6f8" stroke-width="1"/></svg>
<div class="a g" style="left:524px;top:669px;width:411px;height:20px"></div>
<svg style="left:527px;top:670px" width="16" height="16"><use href="#clk" width="16" height="16"/></svg>
<div class="t b" style="left:548px;top:669px;letter-spacing:-0.09px">Formation</div>
<svg style="left:606px;top:672px" width="12" height="12"><use href="#warn" width="12" height="12"/></svg>
<svg style="left:646px;top:670px" width="16" height="16"><use href="#bld" width="16" height="16"/></svg>
<div class="t b" style="left:667px;top:667px;letter-spacing:-0.42px">Anonymous</div>
<div class="t" style="left:760px;top:667px;letter-spacing:0.19px">28/06/2014 00:00</div>
<div class="t" style="left:880px;width:35px;text-align:right;top:667px;letter-spacing:0.22px">0%</div>
<div class="a" style="left:921px;top:670px;width:12px;height:12px;background:#eeeeb4;border:1px solid #b9b98f"></div>
<div class="box" style="left:524px;top:696px;width:411px;height:42px"></div>
<div class="hd" style="left:524px;top:696px;width:411px;height:21px;line-height:23px;padding-left:3px">Les 5 derniers adhérents modifiés</div>
<svg style="left:905px;top:702px" width="24" height="11"><rect x="1" y="1" width="1.2" height="1.2" fill="#eef0f4"/><rect x="1" y="4" width="1.2" height="1.2" fill="#eef0f4"/><rect x="1" y="7" width="1.2" height="1.2" fill="#eef0f4"/><rect x="4" y="1" width="1.2" height="1.2" fill="#eef0f4"/><rect x="4" y="4" width="1.2" height="1.2" fill="#eef0f4"/><rect x="4" y="7" width="1.2" height="1.2" fill="#eef0f4"/><rect x="7" y="1" width="1.2" height="1.2" fill="#eef0f4"/><rect x="7" y="4" width="1.2" height="1.2" fill="#eef0f4"/><rect x="7" y="7" width="1.2" height="1.2" fill="#eef0f4"/><path d="M14.5 1L22.5 9M22.5 1L14.5 9" stroke="#f5f6f8" stroke-width="1"/></svg>
<div class="a g" style="left:524px;top:718px;width:411px;height:20px"></div>
<svg style="left:528px;top:720px" width="14" height="14"><use href="#per" width="14" height="14"/></svg>
<div class="t b" style="left:548px;top:716px;letter-spacing:-0.12px">Philippe GRAND</div>
<div class="t" style="left:854px;top:716px;letter-spacing:0.22px">10/04/2014</div>
<div class="a" style="left:921px;top:719px;width:12px;height:12px;background:#acd5a6;border:1px solid #7f9f7f"></div>
<div class="a" style="left:591px;top:106px;width:162px;height:79px;background:#fff;border-radius:4px;box-shadow:0 3px 7px rgba(0,0,0,.22)"></div>
<div class="a" style="left:611px;top:115px;font-size:12px;line-height:16px;color:#222;letter-spacing:0.31px">Nouvelle adhésion</div>
<div class="a" style="left:611px;top:138px;font-size:12px;line-height:16px;color:#222;letter-spacing:0.22px">Liste</div>
<div class="a" style="left:611px;top:160px;font-size:12px;line-height:16px;color:#222;letter-spacing:0.23px">Statistiques</div>
<div class="a" style="left:751px;top:80px;width:172px;height:124px;background:#fff;border-radius:4px;box-shadow:0 1px 4px rgba(0,0,0,.3)"></div>
<svg style="left:898px;top:74px" width="12" height="6"><path d="M0 6L6 0L12 6Z" fill="#fff"/></svg>
<div class="a" style="left:751px;top:108px;width:172px;height:22px;background:#c80000"></div>
<svg style="left:751px;top:115px" width="7" height="15"><path d="M0 0L6 7.5L0 15Z" fill="#fff"/></svg>
<div class="a" style="left:771px;top:88px;font-size:12px;line-height:16px;color:#222;letter-spacing:0.12px">Adhérents<span style="font-size:11px;letter-spacing:0;position:relative;top:0.5px;margin-left:1px"> »</span></div>
<div class="a" style="left:771px;top:111px;font-size:12px;line-height:16px;color:#fff;letter-spacing:0.2px">Adhésions/cotisations<span style="font-size:11px;letter-spacing:0;position:relative;top:0.5px;margin-left:1px"> »</span></div>
<div class="a" style="left:771px;top:134px;font-size:12px;line-height:16px;color:#222;letter-spacing:0.3px">Catégories<span style="font-size:11px;letter-spacing:0;position:relative;top:0.5px;margin-left:1px"> »</span></div>
<div class="a" style="left:771px;top:157px;font-size:12px;line-height:16px;color:#222;letter-spacing:0.15px">Exports<span style="font-size:11px;letter-spacing:0;position:relative;top:0.5px;margin-left:1px"> »</span></div>
<div class="a" style="left:771px;top:179px;font-size:12px;line-height:16px;color:#222;letter-spacing:0.1px">Types d'adhérents<span style="font-size:11px;letter-spacing:0;position:relative;top:0.5px;margin-left:1px"> »</span></div>
<div class="a" style="left:0;top:741px;width:1024px;height:27px;background:#fff"></div>
<div class="a" style="left:57px;top:740px;width:450px;height:1px;background:#c4c4c4"></div>
</body></html>
